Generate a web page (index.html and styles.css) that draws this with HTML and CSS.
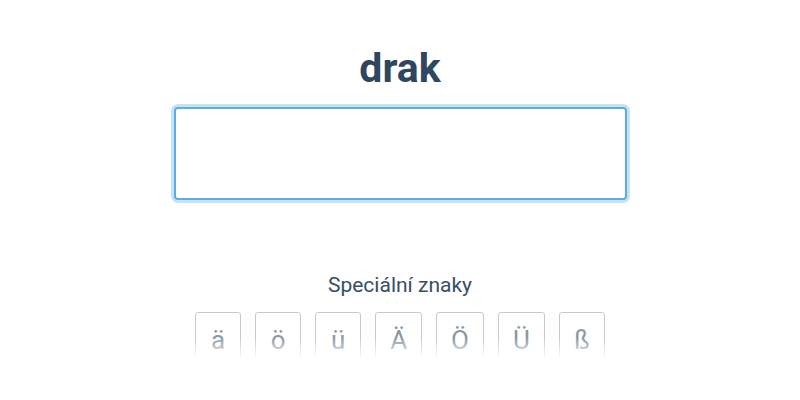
FILE: index.html
```html
<!DOCTYPE html>
<html lang="cs">
<head>
<meta charset="utf-8">
<title>drak</title>
<link rel="stylesheet" href="styles.css">
</head>
<body>
<main class="exercise">
  <h1 class="word">drak</h1>
  <input class="answer" type="text" aria-label="Odpověď">
  <p class="special-label">Speciální znaky</p>
  <div class="keyboard">
    <button class="key" type="button">ä</button>
    <button class="key" type="button">ö</button>
    <button class="key" type="button">ü</button>
    <button class="key" type="button">Ä</button>
    <button class="key" type="button">Ö</button>
    <button class="key" type="button">Ü</button>
    <button class="key" type="button">ß</button>
  </div>
</main>
</body>
</html>
```
FILE: styles.css
```css
html, body {
  margin: 0;
  padding: 0;
  background: #ffffff;
}

body {
  font-family: Roboto, "Liberation Sans", sans-serif;
}

.exercise {
  width: 453px;
  margin: 0 auto;
  padding-top: 44px;
  display: flex;
  flex-direction: column;
  align-items: center;
}

.word {
  margin: 0;
  font-size: 41px;
  line-height: 48px;
  font-weight: 700;
  color: #2f4661;
}

.answer {
  box-sizing: border-box;
  width: 453px;
  height: 93px;
  margin-top: 15px;
  border: 2px solid #5dade2;
  border-radius: 4px;
  box-shadow: 0 0 0 3px rgba(93, 173, 226, 0.35);
  outline: none;
  font-family: inherit;
  font-size: 24px;
  padding: 0 14px;
}

.special-label {
  margin: 73px 0 0;
  font-size: 21px;
  line-height: 24px;
  color: #384d66;
}

.keyboard {
  position: relative;
  display: flex;
  gap: 14px;
  margin-top: 15px;
  height: 47px;
  overflow: hidden;
}

.keyboard::after {
  content: "";
  position: absolute;
  left: 0;
  right: 0;
  top: 0;
  bottom: 0;
  background: linear-gradient(to bottom, rgba(255,255,255,0) 55%, #ffffff 100%);
  pointer-events: none;
}

.key {
  box-sizing: border-box;
  min-width: 46px;
  height: 60px;
  padding: 12px 14px 0;
  border: 1px solid #c3cad0;
  border-radius: 3px;
  background: #ffffff;
  font-family: Roboto, "Liberation Sans", sans-serif;
  font-size: 26px;
  line-height: 31px;
  color: #8a98a4;
  display: flex;
  justify-content: center;
  align-items: flex-start;
}
```
